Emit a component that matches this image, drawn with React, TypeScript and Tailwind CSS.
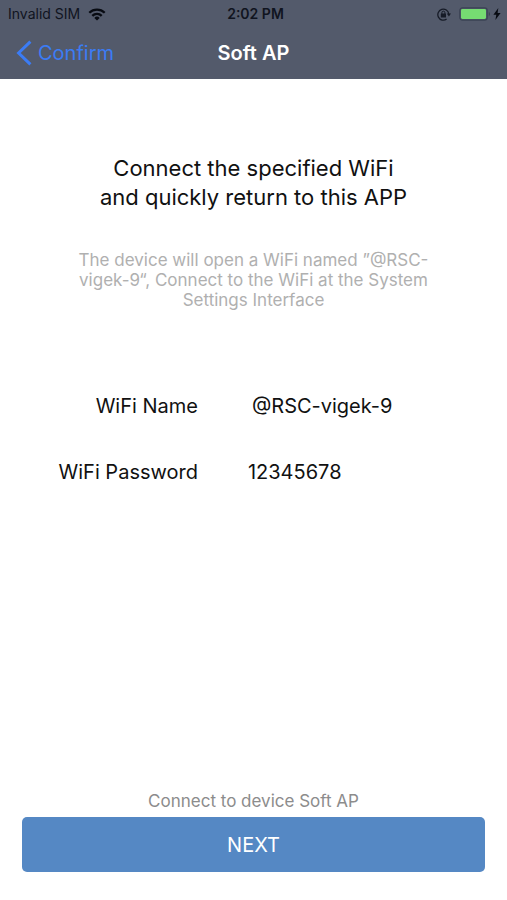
import { clsx } from "clsx";

const credentials = [
  { label: "WiFi Name", value: "@RSC-vigek-9" },
  { label: "WiFi Password", value: "12345678" },
];

function WifiIcon() {
  return (
    <svg width="18" height="13" viewBox="0 0 18 13" aria-hidden="true">
      <g fill="none" stroke="#080b12" strokeWidth="2.3">
        <path d="M1.3 4.7a11 11 0 0 1 15.4 0" />
        <path d="M4.3 7.9a6.7 6.7 0 0 1 9.4 0" />
      </g>
      <path d="M9 12.6 6.3 9.9a3.8 3.8 0 0 1 5.4 0z" fill="#080b12" />
    </svg>
  );
}

function RotationLockIcon() {
  return (
    <svg width="14" height="13" viewBox="0 0 14 13" aria-hidden="true">
      <path
        d="M9.6 11.1A5.5 5.5 0 1 1 11.8 6"
        fill="none"
        stroke="#161b27"
        strokeWidth="1.3"
      />
      <path d="M9.8 5.4H14l-2.1 3.2z" fill="#161b27" />
      <rect x="3.8" y="5.6" width="5.2" height="3.8" rx="0.5" fill="#161b27" />
      <path
        d="M4.9 6V4.7a1.5 1.5 0 0 1 3 0V6"
        fill="none"
        stroke="#161b27"
        strokeWidth="1"
      />
    </svg>
  );
}

function BatteryIcon() {
  return (
    <svg width="32" height="14" viewBox="0 0 32 14" aria-hidden="true">
      <rect
        x="0.8"
        y="0.8"
        width="27.4"
        height="12.4"
        rx="2.6"
        fill="none"
        stroke="#3b4354"
        strokeWidth="1.2"
      />
      <rect x="2" y="2" width="25" height="10" rx="1.4" fill="#76dc72" />
      <path d="M29.8 4.8c1.6.8 1.6 3.6 0 4.4z" fill="#3b4354" />
    </svg>
  );
}

function BoltIcon() {
  return (
    <svg width="8" height="12" viewBox="0 0 8 12" aria-hidden="true">
      <path d="M5.3 0 .4 6.8h2.9L2.4 12l5.2-7.1H4.6z" fill="#080b12" />
    </svg>
  );
}

function StatusBar() {
  return (
    <div className="grid h-7 grid-cols-3 items-center pr-1 pl-2 text-sm text-[#10141f]">
      <div className="flex items-center gap-2">
        <span>Invalid SIM</span>
        <WifiIcon />
      </div>
      <span className="text-center font-semibold">2:02 PM</span>
      <div className="flex items-center justify-end gap-2 pr-0.5">
        <RotationLockIcon />
        <span className="flex items-center gap-0.5">
          <BatteryIcon />
          <BoltIcon />
        </span>
      </div>
    </div>
  );
}

function NavBar() {
  return (
    <nav className="grid grid-cols-3 items-center px-4 pt-[11px] pb-3">
      <a href="#confirm" className="flex items-center gap-1.5 text-xl leading-7 text-[#3b7cf5]">
        <svg width="16" height="26" viewBox="0 0 16 26" aria-hidden="true">
          <path d="M14.4 1.6 2.6 13l11.8 11.4" fill="none" stroke="currentColor" strokeWidth="3" />
        </svg>
        Confirm
      </a>
      <h1 className="text-center text-xl leading-7 font-semibold text-white">Soft AP</h1>
    </nav>
  );
}

export default function App() {
  return (
    <div className="flex min-h-screen flex-col bg-white font-['Inter',sans-serif] text-[#111111]">
      <header className="bg-[#535a6b]">
        <StatusBar />
        <NavBar />
      </header>

      <main className="flex flex-1 flex-col px-[22px] pt-[75px] pb-7">
        <h2 className="text-center text-[22px] leading-[29px]">
          Connect the specified WiFi
          <br />
          and quickly return to this APP
        </h2>

        <p className="mx-auto mt-[38px] max-w-[360px] text-center text-[17px] leading-5 text-[#b0b0b0]">
          The device will open a WiFi named ”@RSC-
          <br />
          vigek-9“, Connect to the WiFi at the System Settings Interface
        </p>

        <dl className="mt-[83px] flex flex-col gap-10 text-xl leading-[26px]">
          {credentials.map(({ label, value }, index) => (
            <div key={label} className="grid grid-cols-[38%_1fr] gap-x-[50px]">
              <dt className="text-right">{label}</dt>
              <dd className={clsx(index === 0 && "pl-1")}>{value}</dd>
            </div>
          ))}
        </dl>

        <div className="mt-auto">
          <p className="pb-1.5 text-center text-[17px] leading-5 text-[#8c8c8c]">
            Connect to device Soft AP
          </p>
          <button
            type="button"
            className="h-[55px] w-full rounded-[5px] bg-[#5588c4] text-xl text-white"
          >
            NEXT
          </button>
        </div>
      </main>
    </div>
  );
}
